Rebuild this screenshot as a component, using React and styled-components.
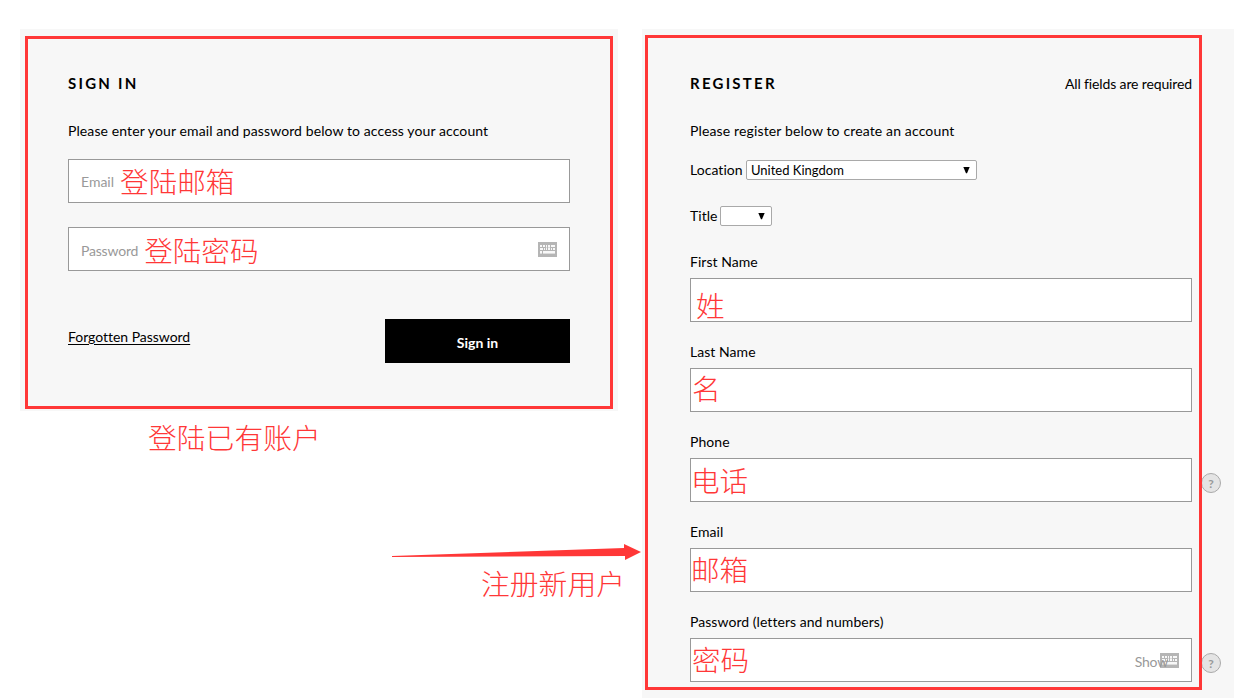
import React from 'react';
import styled, { createGlobalStyle } from 'styled-components';

const GlobalStyle = createGlobalStyle`
  * {
    box-sizing: border-box;
  }

  body {
    margin: 0;
    background: #ffffff;
    color: #000000;
    font-family: Lato, 'Liberation Sans', sans-serif;
    font-size: 14px;
    line-height: 20px;
    overflow: hidden;
  }

  h2,
  p {
    margin: 0;
  }
`;

const Page = styled.main`
  display: flex;
  height: 698px;
  padding: 29px 0 0 20px;
`;

const SignInColumn = styled.div`
  width: 622px;
  flex: none;
`;

const Panel = styled.section`
  position: relative;
  width: ${({ $width }) => $width}px;
  height: ${({ $height }) => $height}px;
  flex: none;
  padding: 44px 48px 0;
  background: #f7f7f7;
`;

const Outline = styled.div`
  position: absolute;
  inset: ${({ $inset }) => $inset};
  border: 3px solid #ff3737;
  pointer-events: none;
`;

const PanelHeader = styled.div`
  display: flex;
  justify-content: space-between;
  align-items: flex-end;
  width: 502px;
  height: 21px;
  margin-bottom: 27px;
`;

const Title = styled.h2`
  align-self: flex-start;
  font-size: 15px;
  font-weight: 700;
  line-height: 20px;
  letter-spacing: 2.25px;
`;

const Text = styled.p`
  white-space: nowrap;
  letter-spacing: ${({ $spacing = 0.1 }) => $spacing}px;
`;

const Label = styled.label`
  display: block;
  white-space: nowrap;
  letter-spacing: 0.05px;
`;

const Field = styled.div`
  position: relative;
  display: flex;
  align-items: center;
  width: 502px;
  height: 44px;
  padding-left: ${({ $indent = 1 }) => $indent}px;
  padding-right: 12px;
  border: 1px solid #999999;
  background: #ffffff;
`;

const SignInFields = styled.div`
  display: flex;
  flex-direction: column;
  gap: 24px;
  margin-top: 18px;
`;

const Placeholder = styled.span`
  margin: ${({ $top }) => $top}px 6px 0 0;
  color: #999999;
  letter-spacing: ${({ $spacing = 0 }) => $spacing}px;
`;

const Note = styled.span`
  margin-top: ${({ $top = 0 }) => $top}px;
  color: #ff3737;
  font-family: 'Noto Sans CJK SC', sans-serif;
  font-size: 28.6px;
  font-weight: 300;
  line-height: 30px;
  white-space: nowrap;
`;

const Caption = styled(Note)`
  display: block;
  margin-left: ${({ $left }) => $left}px;
  font-size: 28.8px;
`;

const Actions = styled.div`
  display: flex;
  justify-content: space-between;
  margin-top: 48px;
`;

const ForgottenLink = styled.a`
  margin-top: 8px;
  color: #000000;
  letter-spacing: -0.03px;
  text-decoration: underline;
  text-underline-offset: 2px;
`;

const SignInButton = styled.button`
  width: 185px;
  height: 44px;
  padding: 3px 0 0;
  border: 0;
  background: #000000;
  color: #ffffff;
  font: 700 14px Lato, sans-serif;
`;

const SelectRow = styled.div`
  display: flex;
  align-items: center;
  height: 20px;
  margin-top: ${({ $top }) => $top}px;
`;

const SelectBox = styled.div`
  display: flex;
  align-items: center;
  justify-content: space-between;
  width: ${({ $width }) => $width}px;
  height: 20px;
  margin-left: auto;
  padding: 0 6px 0 4px;
  border: 1px solid #a9a9a9;
  border-radius: 2px;
  background: #ffffff;
  font-size: 13px;
`;

const LocationRow = styled(SelectRow)`
  width: 287px;
`;

const TitleRow = styled(SelectRow)`
  width: 82px;
`;

const FormGroup = styled.div`
  display: flex;
  flex-direction: column;
  gap: 6px;
  margin-bottom: 20px;
`;

const Groups = styled.div`
  margin-top: 26px;
`;

const Trailing = styled.div`
  display: flex;
  align-items: center;
  margin-left: auto;
`;

const Show = styled.span`
  position: relative;
  z-index: 1;
  margin: 4px -8px 0 0;
  color: #999999;
  letter-spacing: -0.2px;
`;

const Help = styled.span`
  position: absolute;
  top: 14px;
  left: 510px;
  width: 20px;
  height: 20px;
  border: 1px solid #aaaaaa;
  border-radius: 50%;
  background: #e4e4e4;
  color: #999999;
  font-size: 12px;
  font-weight: 700;
  line-height: 19px;
  text-align: center;
`;

const ArrowSvg = styled.svg`
  display: block;
  margin: 92px 0 0 372px;
`;

const KeyboardSvg = styled.svg`
  display: block;
  flex: none;
`;

const KeyboardIcon = () => (
  <KeyboardSvg width="19" height="15" viewBox="0 0 19 15" shapeRendering="crispEdges">
    <path fill="#b5b5b5" d="M0 0h19v15H0z" />
    <path
      fill="#f8f8f8"
      d="M2 3h2v2H2zM5 3h2v2H5zM8 3h1v2H8zM10 3h2v2h-2zM13 3h4v2h-4zM2 6h3v2H2zM6 6h1v2H6zM8 6h1v2H8zM10 6h2v2h-2zM13 6h1v2h-1zM15 6h2v2h-2zM2 9h2v2H2zM5 9h12v2H5z"
    />
    <path fill="#dcdcdc" d="M2 11h2v1H2zM5 11h12v1H5zM8 5h1v1H8zM10 5h2v1h-2z" />
  </KeyboardSvg>
);

const Chevron = () => (
  <svg width="7" height="7" viewBox="0 0 7 7">
    <path d="M.3 0h6.4L4 6.2H3z" />
  </svg>
);

const fields = [
  { label: 'First Name', note: '姓', indent: 5, top: 10 },
  { label: 'Last Name', note: '名', indent: 1, top: -5 },
  { label: 'Phone', note: '电话', indent: 0, top: -1, help: true },
  { label: 'Email', note: '邮箱', indent: 0, top: -3 },
  { label: 'Password (letters and numbers)', note: '密码', indent: 1, top: -2, help: true, show: true },
];

const SignIn = () => (
  <Panel $width={598} $height={382}>
    <PanelHeader>
      <Title>SIGN IN</Title>
    </PanelHeader>
    <Text>Please enter your email and password below to access your account</Text>
    <SignInFields>
      <Field $indent={12}>
        <Placeholder $top={1}>Email</Placeholder>
        <Note $top={-1}>登陆邮箱</Note>
      </Field>
      <Field $indent={12}>
        <Placeholder $top={3} $spacing={-0.2}>Password</Placeholder>
        <Note $top={1}>登陆密码</Note>
        <Trailing>
          <KeyboardIcon />
        </Trailing>
      </Field>
    </SignInFields>
    <Actions>
      <ForgottenLink>Forgotten Password</ForgottenLink>
      <SignInButton>Sign in</SignInButton>
    </Actions>
    <Outline $inset="7px 5px 2px" />
  </Panel>
);

const Register = () => (
  <Panel $width={592} $height={669}>
    <PanelHeader>
      <Title>REGISTER</Title>
      <Text $spacing={-0.13}>All fields are required</Text>
    </PanelHeader>
    <Text $spacing={0.14}>Please register below to create an account</Text>
    <LocationRow $top={19}>
      <Label>Location</Label>
      <SelectBox $width={231}>
        <span>United Kingdom</span>
        <Chevron />
      </SelectBox>
    </LocationRow>
    <TitleRow $top={26}>
      <Label>Title</Label>
      <SelectBox $width={52}>
        <span />
        <Chevron />
      </SelectBox>
    </TitleRow>
    <Groups>
      {fields.map(({ label, note, indent, top, help, show }) => (
        <FormGroup key={label}>
          <Label>{label}</Label>
          <Field $indent={indent}>
            <Note $top={top}>{note}</Note>
            {show && (
              <Trailing>
                <Show>Show</Show>
                <KeyboardIcon />
              </Trailing>
            )}
            {help && <Help>?</Help>}
          </Field>
        </FormGroup>
      ))}
    </Groups>
    <Outline $inset="6px 32px 8px 3px" />
  </Panel>
);

const App = () => {
  return (
    <>
      <GlobalStyle />
      <Page>
        <SignInColumn>
          <SignIn />
          <Caption $top={11} $left={128}>登陆已有账户</Caption>
          <ArrowSvg width="249" height="17" viewBox="0 0 249 17">
            <path fill="#ff3737" d="M0 12l232-8V0l17 8-16 8v-4L0 13z" />
          </ArrowSvg>
          <Caption $top={7} $left={461}>注册新用户</Caption>
        </SignInColumn>
        <Register />
      </Page>
    </>
  );
};

export default App;
